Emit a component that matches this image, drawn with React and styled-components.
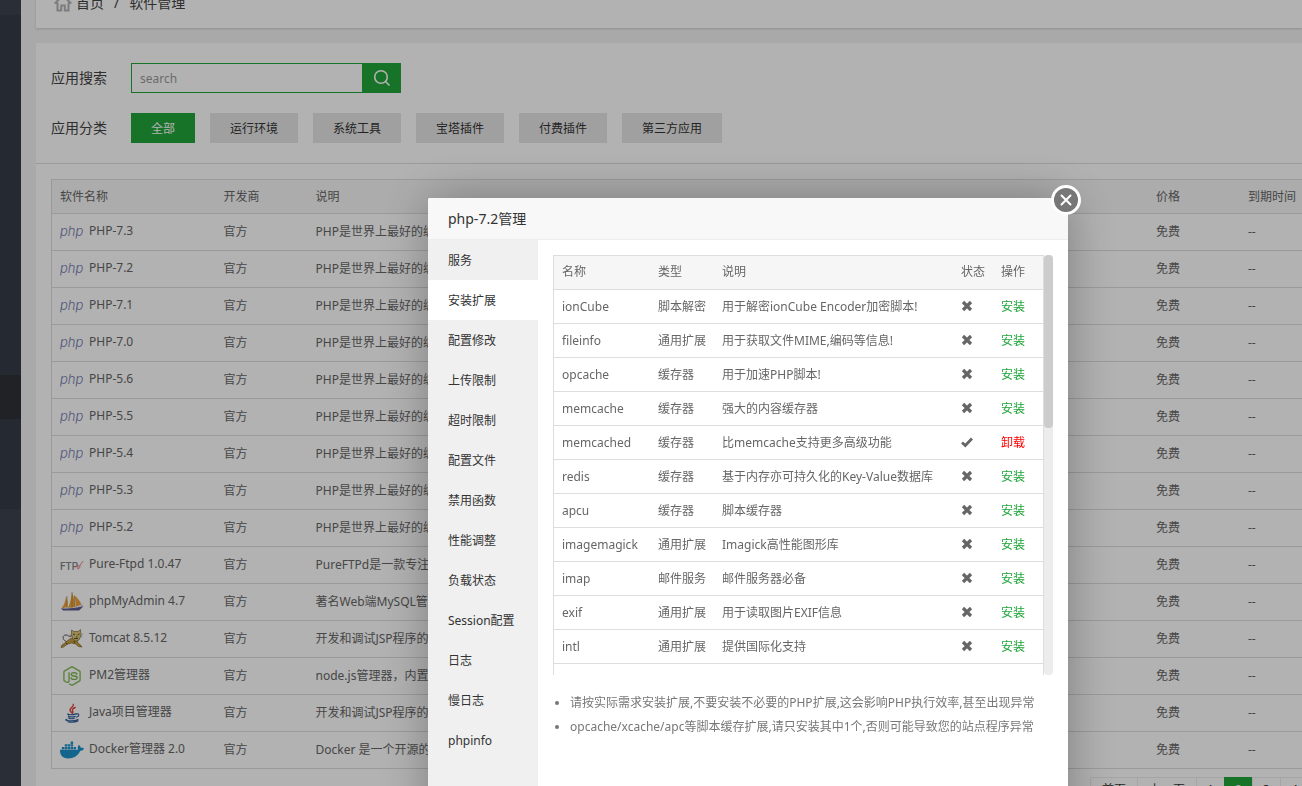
import React, {useState} from 'react';
import styled, {createGlobalStyle, css} from 'styled-components';
import {FaDocker, FaNodeJs} from 'react-icons/fa';

const PHP_DESC = 'PHP是世界上最好的编程语言';
const JSP_DESC = '开发和调试JSP程序的首选';

const categories = ['全部', '运行环境', '系统工具', '宝塔插件', '付费插件', '第三方应用'];

const software = [
    {name: 'PHP-7.3', icon: 'php', desc: PHP_DESC},
    {name: 'PHP-7.2', icon: 'php', desc: PHP_DESC},
    {name: 'PHP-7.1', icon: 'php', desc: PHP_DESC},
    {name: 'PHP-7.0', icon: 'php', desc: PHP_DESC},
    {name: 'PHP-5.6', icon: 'php', desc: PHP_DESC},
    {name: 'PHP-5.5', icon: 'php', desc: PHP_DESC},
    {name: 'PHP-5.4', icon: 'php', desc: PHP_DESC},
    {name: 'PHP-5.3', icon: 'php', desc: PHP_DESC},
    {name: 'PHP-5.2', icon: 'php', desc: PHP_DESC},
    {name: 'Pure-Ftpd 1.0.47', icon: 'ftp', desc: 'PureFTPd是一款专注于安全的软件'},
    {name: 'phpMyAdmin 4.7', icon: 'sail', desc: '著名Web端MySQL管理工具'},
    {name: 'Tomcat 8.5.12', icon: 'tomcat', desc: JSP_DESC},
    {name: 'PM2管理器', icon: 'node', desc: 'node.js管理器，内置版本管理'},
    {name: 'Java项目管理器', icon: 'java', desc: JSP_DESC},
    {name: 'Docker管理器 2.0', icon: 'docker', desc: 'Docker 是一个开源的应用容器引擎'},
];

const menu = [
    '服务', '安装扩展', '配置修改', '上传限制', '超时限制', '配置文件', '禁用函数',
    '性能调整', '负载状态', 'Session配置', '日志', '慢日志', 'phpinfo',
];

const extensions = [
    {name: 'ionCube', type: '脚本解密', desc: '用于解密ionCube Encoder加密脚本!'},
    {name: 'fileinfo', type: '通用扩展', desc: '用于获取文件MIME,编码等信息!'},
    {name: 'opcache', type: '缓存器', desc: '用于加速PHP脚本!'},
    {name: 'memcache', type: '缓存器', desc: '强大的内容缓存器'},
    {name: 'memcached', type: '缓存器', desc: '比memcache支持更多高级功能', installed: true},
    {name: 'redis', type: '缓存器', desc: '基于内存亦可持久化的Key-Value数据库'},
    {name: 'apcu', type: '缓存器', desc: '脚本缓存器'},
    {name: 'imagemagick', type: '通用扩展', desc: 'Imagick高性能图形库'},
    {name: 'imap', type: '邮件服务', desc: '邮件服务器必备'},
    {name: 'exif', type: '通用扩展', desc: '用于读取图片EXIF信息'},
    {name: 'intl', type: '通用扩展', desc: '提供国际化支持'},
];

const PhpIcon = () => (
    <svg width="24" height="24" viewBox="0 0 24 24">
        <text x="0" y="16" fontFamily="Inter, sans-serif" fontStyle="italic" fontWeight="300" fontSize="13" fill="#7079ad">php</text>
    </svg>
);

const FtpIcon = () => (
    <svg width="24" height="24" viewBox="0 0 24 24">
        <text x="0" y="17" fontFamily="Roboto, sans-serif" fontWeight="500" fontSize="10" fill="#868686">FTP</text>
        <path d="M23 8l-4.500 6.500M19 12.500c-2 0-2.500 3.500-1 3.500s2-2 2-3.500" fill="none" stroke="#e88" strokeWidth="1"/>
    </svg>
);

const SailIcon = () => (
    <svg width="24" height="24" viewBox="0 0 24 24">
        <path d="M6 6.500C5.500 11 4 15 1.500 18.500L7.500 17C8 13 7.500 10 6 6.500z" fill="#eda13c"/>
        <path d="M12 2.500C11 9 10 14 8 18l6.500-1C15 12 14 7 12 2.500z" fill="#f2a42f"/>
        <path d="M14 5c1.500 4 1.500 8 1.500 12l6-2.500C20 11 17.500 8 14 5z" fill="#eda13c"/>
        <path d="M12 2v16M7 6v12M14.500 6v11" stroke="#8b7550" strokeWidth=".6"/>
        <path d="M1 18.200c6 .8 15 0 22.500-2.200-1.500 2-3 3-4.500 4.500H3z" fill="#5e5b93"/>
        <path d="M17 17.500l5-4 1 2.500z" fill="#d8d6e4"/>
    </svg>
);

const TomcatIcon = () => (
    <svg width="24" height="24" viewBox="0 0 24 24">
        <path d="M7 15c-5-2-5-7-1-7 3 0 1 2 5 1" fill="none" stroke="#555" strokeWidth="1"/>
        <path d="M12 11c-3 1-5 3-7 5l-3 2-1 2.500 2.500-.5 4-3 4-1 4 1 3 2.500 3.500.5-1-1.500-3-2.500-2-5z" fill="#c7a039" stroke="#6b5726" strokeWidth=".6"/>
        <path d="M11.500 3l2.500 1.500h4L20.500 2.500l.5 6-2 4.500-3 1-3-1.500-1.500-4z" fill="#dcc573" stroke="#6a5e3c" strokeWidth=".6"/>
        <path d="M13 7l2 .8M19.500 7l-2 .8M16 10h1.500M14 11.500h4M13.500 14l1.500 2M6 16l1.500 1.500" stroke="#3b3425" strokeWidth=".8"/>
        <path d="M9.500 8l3 1M21 8l2-1M20.500 9.500l2 .5" stroke="#777" strokeWidth=".5"/>
    </svg>
);

const JavaIcon = () => (
    <svg width="22" height="22" viewBox="0 0 24 24" fill="none" strokeLinecap="round">
        <path d="M13.500 2.500c1 3-5 4-3.500 7 .4 1 1.200 1.500 1.800 2.200M15.500 6c-2.500 1-4 2.300-2.800 3.800.8 1 .5 1.700-.3 2.400" stroke="#e2403e" strokeWidth="1.500"/>
        <path d="M8 13c-2.500.8 4 1.500 8.500 0M8 15.500c1 1 5 1 7.500.2M8.500 17.500c1 1 4.500 1 6 .2M6.500 18.800c-5 1.500 7 3 12 .2M8 21.800c4 .6 8 .3 10.500-1.200" stroke="#35639f" strokeWidth="1.300"/>
        <path d="M17 13c3.500-.8 3 2.800-.2 3.600" stroke="#35639f" strokeWidth="1.300"/>
    </svg>
);

const icons = {
    php: <PhpIcon/>,
    ftp: <FtpIcon/>,
    sail: <SailIcon/>,
    tomcat: <TomcatIcon/>,
    node: <FaNodeJs size={20} color="#7fb84e"/>,
    java: <JavaIcon/>,
    docker: <FaDocker size={24} color="#1c91cb"/>,
};

const HomeIcon = () => (
    <svg width="18" height="18" viewBox="0 0 18 18" fill="none" stroke="#b4b4b4" strokeWidth="2">
        <path d="M.8 9.500L9 1.500l8.200 8M3.500 8.500v8h3.700v-5h3.600v5h3.700v-8"/>
    </svg>
);

const SearchIcon = () => (
    <svg width="18" height="18" viewBox="0 0 18 18" fill="none" stroke="#fff" strokeWidth="1.600">
        <circle cx="8" cy="8" r="6.300"/>
        <path d="M12.500 12.500l4 4"/>
    </svg>
);

const CloseIcon = () => (
    <svg width="30" height="30" viewBox="0 0 30 30">
        <circle cx="15" cy="15" r="13.500" fill="#777" stroke="#fff" strokeWidth="3"/>
        <path d="M10.500 10.500l9 9M19.500 10.500l-9 9" stroke="#fff" strokeWidth="2" strokeLinecap="round"/>
    </svg>
);

const StatusIcon = ({installed}) => (
    <svg width="12" height="12" viewBox="0 0 12 12" fill="none" stroke="#666" role="img" aria-label={installed ? '已安装' : '未安装'}>
        {installed
            ? <path d="M1 6.500l3.300 3L11 2.500" strokeWidth="2.800"/>
            : <path d="M2 2l8 8M10 2l-8 8" strokeWidth="3.200"/>}
    </svg>
);

const App = () => {
    const [category, setCategory] = useState('全部');
    const [tab, setTab] = useState('安装扩展');
    const [isOpen, setOpen] = useState(true);

    return (
        <Page>
            <GlobalStyle/>
            <SideNav>
                <SideBlock $height={15} $color="#3d434f"/>
                <SideBlock $height={360} $color="#363c48"/>
                <SideBlock $height={44} $color="#2e3136"/>
                <SideBlock $height={90} $color="#363c48"/>
                <SideBlock $grow $color="#3d434f"/>
            </SideNav>
            <Main>
                <Breadcrumb>
                    <HomeIcon/>
                    <Crumb href="#home">首页</Crumb>
                    <Slash>/</Slash>
                    <Crumb href="#soft">软件管理</Crumb>
                </Breadcrumb>
                <Card>
                    <Filters>
                        <FilterRow>
                            <FilterLabel htmlFor="search">应用搜索</FilterLabel>
                            <SearchInput id="search" placeholder="search"/>
                            <SearchButton aria-label="搜索"><SearchIcon/></SearchButton>
                        </FilterRow>
                        <FilterRow>
                            <FilterLabel as="span">应用分类</FilterLabel>
                            <Categories>
                                {categories.map(item => (
                                    <Category key={item} $active={item === category} onClick={() => setCategory(item)}>
                                        {item}
                                    </Category>
                                ))}
                            </Categories>
                        </FilterRow>
                    </Filters>
                    <SoftTable>
                        <colgroup>
                            <Col $width={164}/>
                            <Col $width={92}/>
                            <col/>
                            <Col $width={92}/>
                            <Col $width={62}/>
                        </colgroup>
                        <thead>
                            <tr>
                                <th>软件名称</th>
                                <th>开发商</th>
                                <th>说明</th>
                                <th>价格</th>
                                <th>到期时间</th>
                            </tr>
                        </thead>
                        <tbody>
                            {software.map(item => (
                                <tr key={item.name}>
                                    <td>
                                        <SoftName>
                                            <SoftIcon>{icons[item.icon]}</SoftIcon>
                                            <SoftTitle>{item.name}</SoftTitle>
                                        </SoftName>
                                    </td>
                                    <td>官方</td>
                                    <td>{item.desc}</td>
                                    <td>免费</td>
                                    <td>--</td>
                                </tr>
                            ))}
                        </tbody>
                    </SoftTable>
                    <Pagination>
                        <PageLink href="#1">首页</PageLink>
                        <PageLink href="#1">上一页</PageLink>
                        <PageLink href="#1" $number>1</PageLink>
                        <PageLink href="#2" $number $active>2</PageLink>
                        <PageLink href="#3" $number>3</PageLink>
                        <PageLink href="#4" $number>4</PageLink>
                    </Pagination>
                </Card>
            </Main>
            {isOpen && (
                <React.Fragment>
                    <Shade/>
                    <Modal role="dialog" aria-label="php-7.2管理">
                        <ModalTitle>php-7.2管理</ModalTitle>
                        <CloseButton aria-label="关闭" onClick={() => setOpen(false)}><CloseIcon/></CloseButton>
                        <ModalBody>
                            <Menu>
                                {menu.map(item => (
                                    <MenuItem key={item} $active={item === tab} onClick={() => setTab(item)}>
                                        {item}
                                    </MenuItem>
                                ))}
                            </Menu>
                            <Content>
                                <Scroller>
                                    <TableBox>
                                        <ExtTable>
                                            <colgroup>
                                                <Col $width={96}/>
                                                <Col $width={64}/>
                                                <col/>
                                                <Col $width={40}/>
                                                <Col $width={50}/>
                                            </colgroup>
                                            <thead>
                                                <tr>
                                                    <th>名称</th>
                                                    <th>类型</th>
                                                    <th>说明</th>
                                                    <th>状态</th>
                                                    <th>操作</th>
                                                </tr>
                                            </thead>
                                            <tbody>
                                                {extensions.map(item => (
                                                    <tr key={item.name}>
                                                        <td>{item.name}</td>
                                                        <td>{item.type}</td>
                                                        <td>{item.desc}</td>
                                                        <td><StatusIcon installed={item.installed}/></td>
                                                        <td>
                                                            <Action href="#action" $danger={item.installed}>
                                                                {item.installed ? '卸载' : '安装'}
                                                            </Action>
                                                        </td>
                                                    </tr>
                                                ))}
                                            </tbody>
                                        </ExtTable>
                                    </TableBox>
                                    <Track><Thumb/></Track>
                                </Scroller>
                                <Notes>
                                    <li>请按实际需求安装扩展,不要安装不必要的PHP扩展,这会影响PHP执行效率,甚至出现异常</li>
                                    <li>opcache/xcache/apc等脚本缓存扩展,请只安装其中1个,否则可能导致您的站点程序异常</li>
                                </Notes>
                            </Content>
                        </ModalBody>
                    </Modal>
                </React.Fragment>
            )}
        </Page>
    );
};

const GlobalStyle = createGlobalStyle`
    * {
        box-sizing: border-box;
    }

    body {
        margin: 0;
        background: #f2f2f2;
        color: #666;
        font-family: "Noto Sans", "Noto Sans CJK SC", sans-serif;
        font-size: 12px;
        line-height: 20px;
    }

    button, input {
        font: inherit;
        border: 0;
        padding: 0;
        border-radius: 0;
    }

    button {
        cursor: pointer;
    }

    a {
        color: inherit;
        text-decoration: none;
    }
`;

const Page = styled.div`
    display: flex;
    height: 100vh;
    overflow: hidden;
`;

const SideNav = styled.div`
    display: flex;
    flex-direction: column;
    flex: 0 0 21px;
`;

const SideBlock = styled.div`
    flex: ${({$grow, $height}) => $grow ? '1' : `0 0 ${$height}px`};
    background: ${({$color}) => $color};
`;

const Main = styled.div`
    flex: 1;
    min-width: 0;
    padding-left: 15px;
`;

/* the page is scrolled a little, the bar starts above the window */
const Breadcrumb = styled.div`
    display: flex;
    align-items: center;
    height: 50px;
    margin: -22px 0 15px;
    padding-left: 18px;
    background: #fff;
    box-shadow: 0 1px 2px rgba(0, 0, 0, .15);
    color: #444;
    font-size: 14px;
`;

const Crumb = styled.a`
    margin-left: 4px;
`;

const Slash = styled.span`
    margin: 0 6px 0 10px;
`;

const Card = styled.div`
    background: #fff;
    min-height: 800px;
`;

const Filters = styled.div`
    display: flex;
    flex-direction: column;
    gap: 20px;
    padding: 20px 15px;
    border-bottom: 1px solid #ddd;
    margin-bottom: 15px;
`;

const FilterRow = styled.div`
    display: flex;
    align-items: center;
    height: 30px;
`;

const FilterLabel = styled.label`
    width: 80px;
    color: #444;
    font-size: 14px;
`;

const SearchInput = styled.input`
    width: 232px;
    height: 30px;
    padding: 0 8px;
    border: 1px solid #20a53a;
    outline: 0;
    background: #fff;

    &::placeholder {
        color: #999;
    }
`;

const SearchButton = styled.button`
    display: flex;
    align-items: center;
    justify-content: center;
    width: 38px;
    height: 30px;
    background: #20a53a;
`;

const Categories = styled.div`
    display: flex;
    gap: 15px;
`;

const Category = styled.button`
    height: 30px;
    padding: 2px 20px 0;
    background: ${({$active}) => $active ? '#20a53a' : '#e6e6e6'};
    color: ${({$active}) => $active ? '#fff' : '#333'};
`;

const Col = styled.col`
    width: ${({$width}) => $width}px;
`;

const tableBase = css`
    table-layout: fixed;
    border-collapse: collapse;

    th, td {
        padding: 0 0 0 8px;
        border-bottom: 1px solid #ddd;
        text-align: left;
        font-weight: normal;
        white-space: nowrap;
    }

    th {
        height: 34px;
        background: #f6f6f6;
    }
`;

const SoftTable = styled.table`
    ${tableBase};
    width: calc(100% - 15px);
    margin-left: 15px;
    border: 1px solid #ddd;
    border-right: 0;

    td {
        height: 37px;
        overflow: hidden;
    }
`;

const SoftName = styled.div`
    display: flex;
    align-items: center;
    gap: 5px;
`;

const SoftIcon = styled.span`
    display: flex;
    justify-content: center;
    width: 24px;
`;

const SoftTitle = styled.span`
    padding-bottom: 2px;
`;

const Pagination = styled.div`
    display: flex;
    width: 212px;
    margin: 8px 0 0 auto;
    overflow: hidden;
`;

const PageLink = styled.a`
    flex: none;
    width: ${({$number}) => $number ? '29px' : 'auto'};
    padding: ${({$number}) => $number ? '2px 0 6px' : '2px 11px 6px'};
    border: 1px solid ${({$active}) => $active ? '#20a53a' : '#ececec'};
    background: ${({$active}) => $active ? '#20a53a' : '#fff'};
    color: ${({$active}) => $active ? '#fff' : '#333'};
    text-align: center;

    & + & {
        margin-left: -1px;
    }
`;

const Shade = styled.div`
    position: fixed;
    inset: 0;
    background: rgba(0, 0, 0, .3);
`;

const Modal = styled.div`
    position: fixed;
    top: 198px;
    left: 428px;
    width: 640px;
    height: 640px;
    display: flex;
    flex-direction: column;
    border-radius: 2px;
    background: #fff;
    box-shadow: 1px 1px 50px rgba(0, 0, 0, .3);
`;

const ModalTitle = styled.div`
    padding-left: 20px;
    border-bottom: 1px solid #eee;
    border-radius: 2px 2px 0 0;
    background: #f8f8f8;
    color: #333;
    font-size: 14px;
    line-height: 41px;
`;

const CloseButton = styled.button`
    position: absolute;
    top: -13px;
    right: -13px;
    width: 30px;
    height: 30px;
    background: none;

    svg {
        display: block;
    }
`;

const ModalBody = styled.div`
    display: flex;
    flex: 1;
`;

const Menu = styled.div`
    display: flex;
    flex-direction: column;
    flex: 0 0 110px;
    background: #f0f0f0;
`;

const MenuItem = styled.button`
    height: 40px;
    padding: 2px 0 0 20px;
    background: ${({$active}) => $active ? '#fff' : 'transparent'};
    color: #333;
    text-align: left;
`;

const Content = styled.div`
    flex: 1;
    min-width: 0;
    padding: 15px;
`;

const Scroller = styled.div`
    display: flex;
    height: 420px;
`;

const TableBox = styled.div`
    flex: 1;
    overflow: hidden;
    border: 1px solid #ddd;
    border-bottom: 0;
`;

const ExtTable = styled.table`
    ${tableBase};
    width: 100%;

    th {
        height: 33px;
    }

    td {
        height: 34px;
        padding-top: 2px;
    }

    svg {
        display: block;
        margin-bottom: 2px;
    }
`;

const Action = styled.a`
    color: ${({$danger}) => $danger ? 'red' : '#20a53a'};
`;

const Track = styled.div`
    flex: 0 0 9px;
    border-radius: 4px;
    background: #ececec;
`;

const Thumb = styled.div`
    height: 173px;
    border-radius: 4px;
    background: #ccc;
`;

const Notes = styled.ul`
    margin: 16px 0 0;
    padding-left: 17px;
    color: #777;
    line-height: 24px;
    white-space: nowrap;
`;

export default App;
